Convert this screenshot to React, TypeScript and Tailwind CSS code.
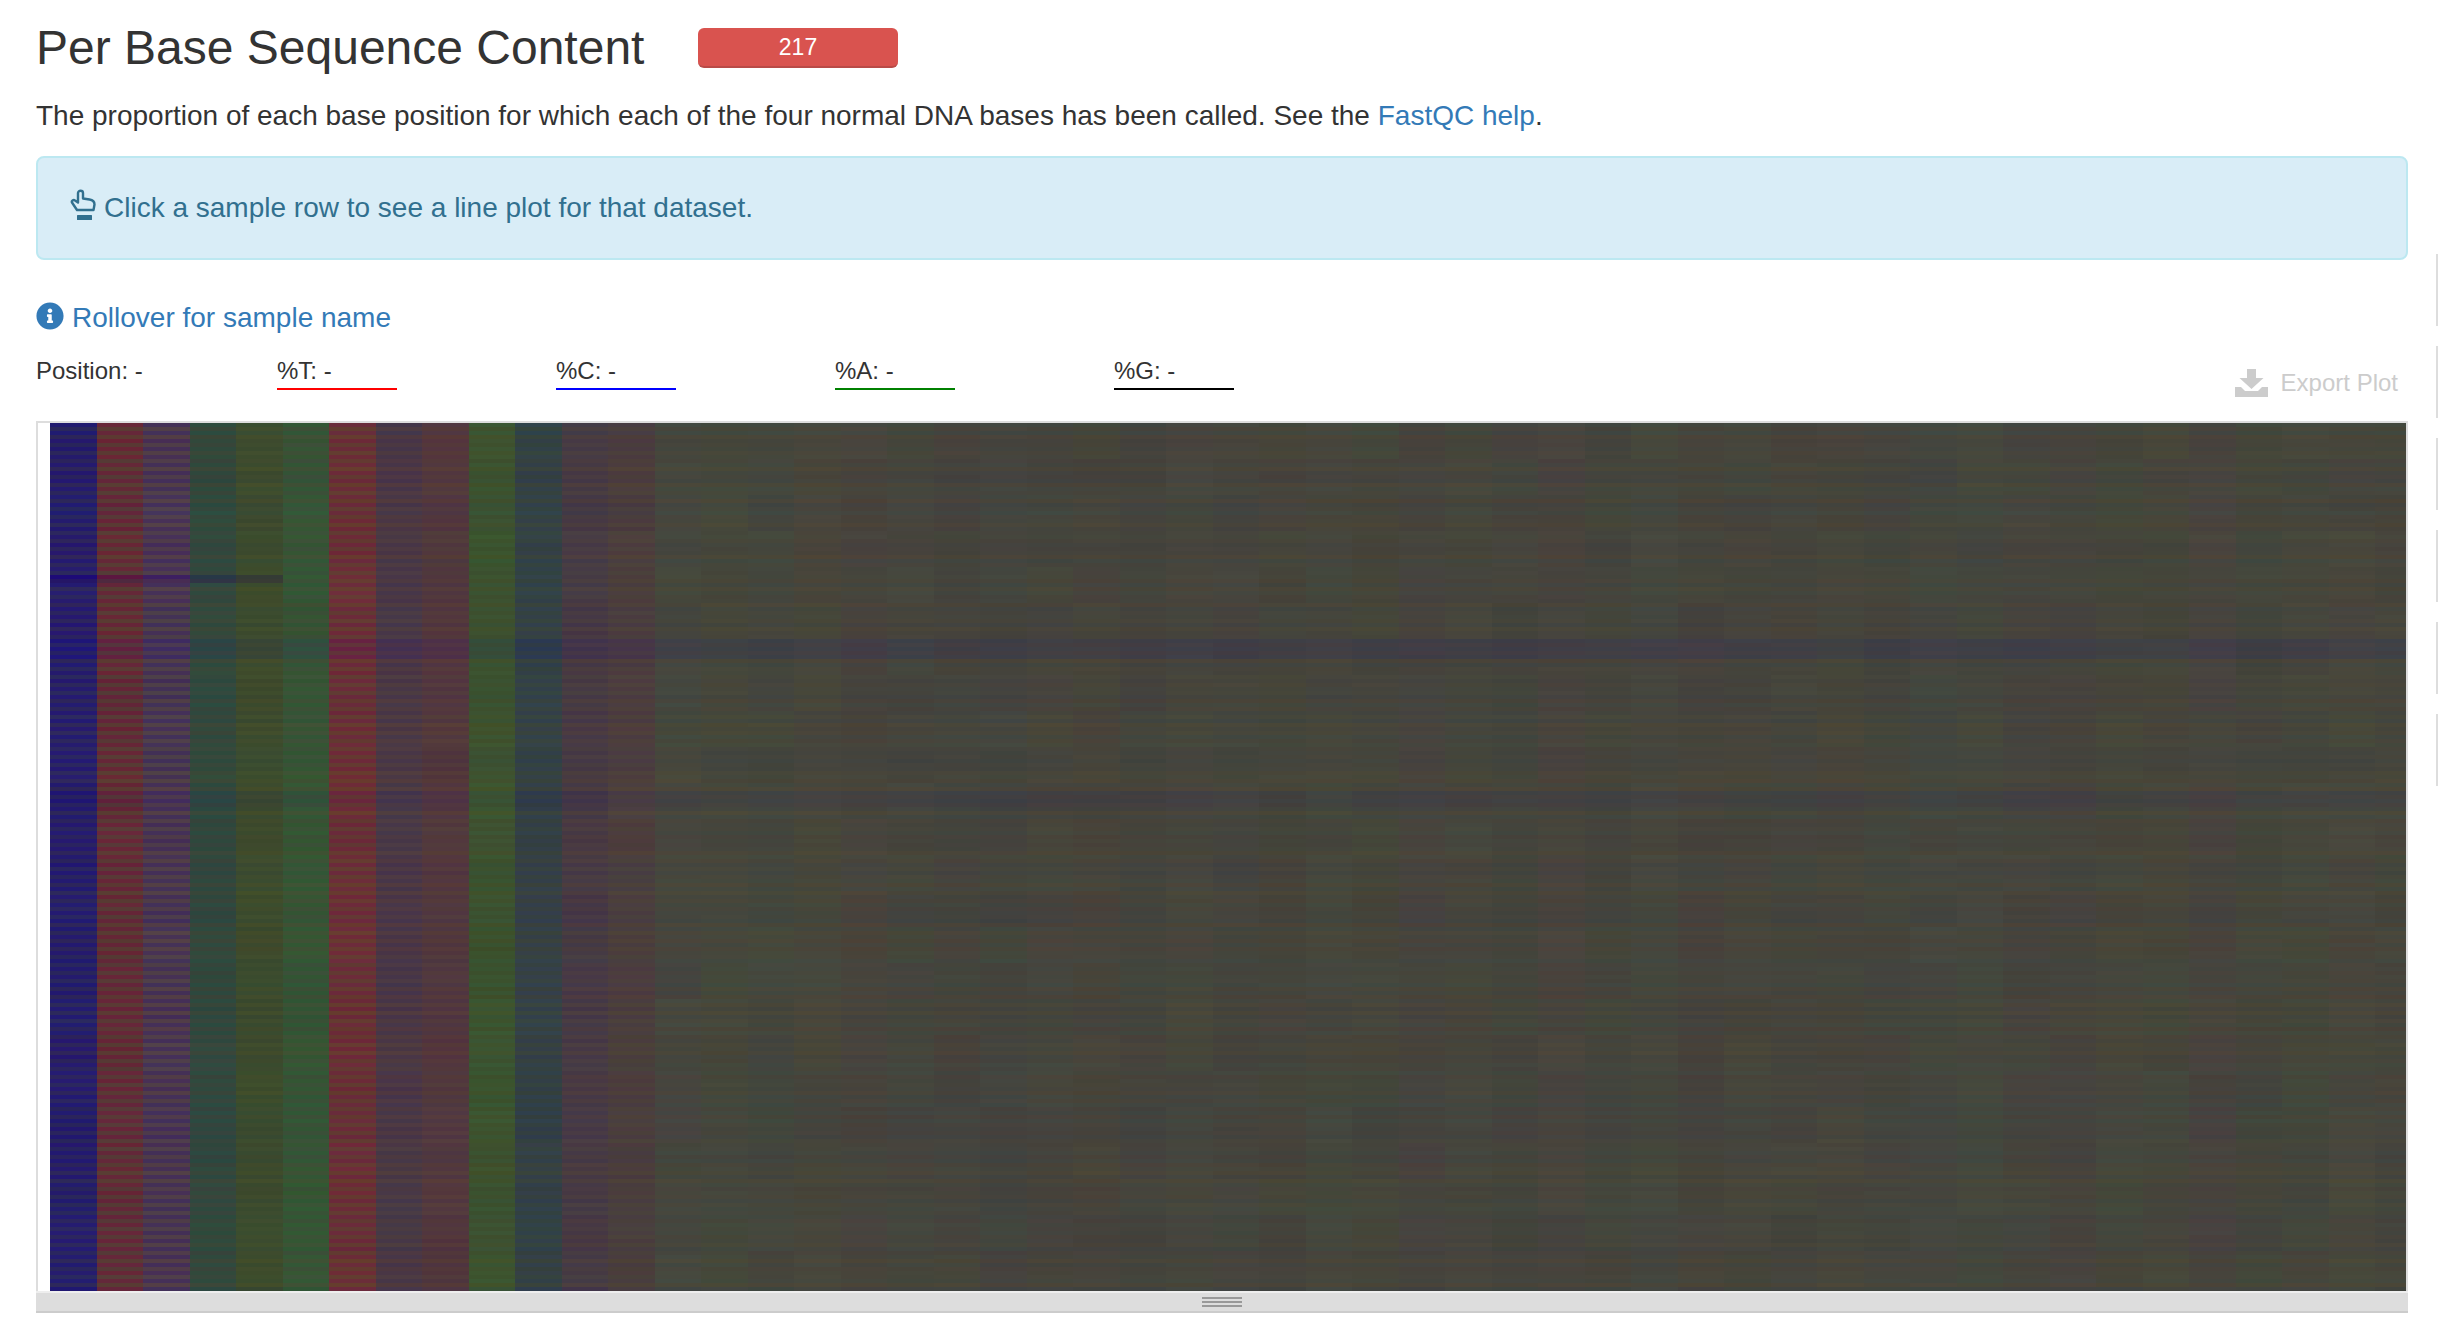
import { useMemo } from 'react';
import { FaInfoCircle } from 'react-icons/fa';

const ROWS = 217;
const COLS = 51;
const CELL_W = 46.5;
const CELL_H = 4;

type RGB = [number, number, number];

// mean colour of the first columns, forward read / reverse read
const HEAD: [RGB, RGB][] = [
  [[36, 26, 112], [44, 38, 92]],
  [[102, 38, 56], [88, 58, 52]],
  [[68, 48, 88], [80, 62, 72]],
  [[46, 74, 62], [56, 70, 58]],
  [[58, 74, 46], [64, 76, 44]],
  [[50, 86, 52], [60, 80, 54]],
  [[108, 42, 58], [100, 58, 48]],
  [[70, 54, 72], [78, 58, 64]],
  [[80, 54, 64], [84, 58, 58]],
  [[58, 84, 50], [62, 80, 44]],
  [[50, 64, 74], [54, 66, 62]],
  [[68, 56, 70], [74, 60, 64]],
  [[74, 60, 64], [76, 64, 58]],
];

function rng(seed: number) {
  let s = seed;
  return () => {
    s = (s * 1664525 + 1013904223) % 4294967296;
    return s / 4294967296;
  };
}

function buildCells() {
  const r = rng(217);
  const rowTint: RGB[] = [];
  for (let y = 0; y < ROWS; y++) {
    const k = (r() - 0.5) * 5;
    rowTint.push([k, (r() - 0.5) * 4, -k]);
  }
  // rows that stand out over the full width
  [54, 55, 56, 57, 58].forEach((y) => {
    rowTint[y] = [-5, -6, 9];
  });
  [92, 93, 94, 95].forEach((y) => {
    rowTint[y] = [-4, -4, 5];
  });

  const colTint: RGB[] = [];
  for (let x = 0; x < COLS; x++) {
    colTint.push([(r() - 0.5) * 3.5, (r() - 0.5) * 3.5, (r() - 0.5) * 3]);
  }

  const cells: { x: number; y: number; fill: string }[] = [];
  for (let x = 0; x < COLS; x++) {
    let block: RGB = [0, 0, 0];
    for (let y = 0; y < ROWS; y++) {
      const odd = y % 2;
      if (y % 9 === 0) {
        block = [(r() - 0.5) * 4, (r() - 0.5) * 4, (r() - 0.5) * 4];
      }
      let base: RGB;
      if (x < 13) {
        base = HEAD[x][odd];
      } else {
        const t = colTint[x];
        base = odd
          ? [72 + t[0], 68 + t[1], 58 + t[2]]
          : [67 + t[0], 69 + t[1], 62 + t[2]];
      }
      const rt = rowTint[y];
      // one sample with a dark trace in the first cycles only
      const dark: RGB = (y === 38 || y === 39) && x < 5 ? [-10, -18, 10] : [0, 0, 0];
      const n = (r() - 0.5) * 2;
      const c = [0, 1, 2].map((i) => Math.round(base[i] + rt[i] + block[i] + dark[i] + n));
      cells.push({ x: x * CELL_W, y: y * CELL_H, fill: `rgb(${c[0]},${c[1]},${c[2]})` });
    }
  }
  return cells;
}

function Heatmap() {
  const cells = useMemo(buildCells, []);
  return (
    <svg width={2356} height={ROWS * CELL_H} shapeRendering="crispEdges" className="block">
      {cells.map((c, i) => (
        <rect key={i} x={c.x} y={c.y} width={CELL_W + 0.5} height={CELL_H} fill={c.fill} />
      ))}
    </svg>
  );
}

function HandIcon() {
  return (
    <svg width="26" height="32" viewBox="0 0 26 32" className="shrink-0 mb-[6px]" fill="none">
      <path
        d="M7 21 L2 13.5 C1.2 12 3.4 10.2 5 11.4 L8 13.5 L8 4 C8 1 13 1 13 4 L13 9.5 L19.5 10.5 C22.5 11 24.5 12.5 24.5 15.5 L23.5 21 Z"
        stroke="#31708f"
        strokeWidth="2.4"
        strokeLinejoin="round"
      />
      <rect x="7" y="26" width="15" height="5" rx="0.5" fill="#31708f" />
    </svg>
  );
}

function SaveIcon() {
  return (
    <svg width="33" height="28" viewBox="0 0 33 28" fill="#ccc" className="shrink-0">
      <path d="M12 0 H21 V9 H28.5 L16.5 20 L4.5 9 H12 Z" />
      <path d="M0 18 H6 L10 22 H23 L27 18 H33 V28 H0 Z" />
    </svg>
  );
}

const STATS = [
  { label: '%T: -', line: 'bg-[#ff0000]' },
  { label: '%C: -', line: 'bg-[#0000ff]' },
  { label: '%A: -', line: 'bg-[#008000]' },
  { label: '%G: -', line: 'bg-[#000000]' },
];

export default function App() {
  return (
    <div className="relative h-[1335px] overflow-hidden bg-white font-['Liberation_Sans',sans-serif] text-[#333]">
      <div className="pl-[36px] w-[2408px]">
        {/* Title */}
        <div className="flex items-center h-[94px]">
          <h1 className="text-[48px] leading-[52px] mt-[1px] font-normal w-[662px] shrink-0">Per Base Sequence Content</h1>
          <div className="w-[200px] h-[40px] mt-[2px] rounded-[6px] bg-[#d9534f] border-b-2 border-[#b94a47] text-white text-[23px] flex items-center justify-center">
            217
          </div>
        </div>

        <p className="text-[28px] leading-[37px] h-[37px] mt-[3px]">
          The proportion of each base position for which each of the four normal DNA bases has been called. See the{' '}
          <a className="text-[#337ab7]">FastQC help</a>.
        </p>

        <div className="mt-[22px] h-[104px] rounded-[8px] border-2 border-[#bce8f1] bg-[#d9edf7] text-[#31708f] flex items-center pl-[32px] text-[28px]">
          <HandIcon />
          <span className="ml-[8px]">Click a sample row to see a line plot for that dataset.</span>
        </div>

        {/* Sample name rollover */}
        <div className="flex items-center mt-[40px] h-[36px] text-[#337ab7] text-[28px]">
          <FaInfoCircle className="w-[28px] h-[28px] mb-[4px] shrink-0" />
          <span className="ml-[8px]">Rollover for sample name</span>
        </div>

        {/* Values under the cursor */}
        <div className="flex mt-[18px] h-[67px]">
          <div className="w-[241px] text-[24px] leading-[34px] shrink-0">Position: -</div>
          {STATS.map((s) => (
            <div key={s.label} className="w-[279px] shrink-0">
              <div className="text-[24px] leading-[34px] h-[34px]">{s.label}</div>
              <div className={`w-[120px] h-[2px] ${s.line}`} />
            </div>
          ))}
          <div className="ml-auto flex items-center gap-[13px] h-[52px] pr-[10px] mt-[3px] text-[24px] text-[#ccc]">
            <SaveIcon />
            <span>Export Plot</span>
          </div>
        </div>

        {/* Heatmap */}
        <div className="border-2 border-[#ddd] border-b-0 bg-white">
          <div className="pl-[12px] bg-white">
            <Heatmap />
          </div>
        </div>
        <div className="h-[22px] bg-[#ddd] border-t-2 border-t-[#eee] border-b-2 border-b-[#ccc] flex flex-col items-center gap-[2px] pt-[4px]">
          <div className="w-[40px] h-[2px] bg-[#999]" />
          <div className="w-[40px] h-[2px] bg-[#999]" />
          <div className="w-[40px] h-[2px] bg-[#999]" />
        </div>
      </div>

      {/* Toolbox tabs hidden past the window edge */}
      <div className="absolute right-0 top-[254px] flex flex-col gap-[20px]">
        {[0, 1, 2, 3, 4, 5].map((i) => (
          <div key={i} className="w-[2px] h-[72px] bg-[#ddd]" />
        ))}
      </div>
    </div>
  );
}
